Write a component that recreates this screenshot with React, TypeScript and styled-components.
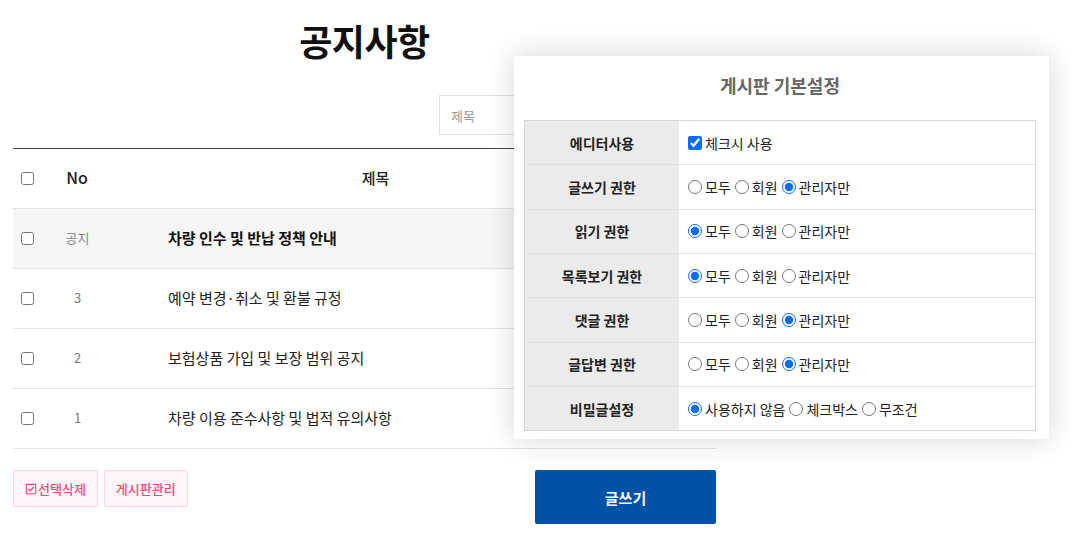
import React from "react";
import styled, { createGlobalStyle } from "styled-components";
import { FaRegCheckSquare } from "react-icons/fa";

const Global = createGlobalStyle`
  html, body { margin: 0; padding: 0; background: #fff; }
  body { font-family: "Noto Sans CJK KR", "Noto Sans", sans-serif; color: #222; }
  * { box-sizing: border-box; }
`;

const Page = styled.div`
  position: relative;
  width: 1072px;
  height: 535px;
  overflow: hidden;
  padding: 0 13px;
`;

const Board = styled.div`
  width: 703px;
  display: flex;
  flex-direction: column;
`;

const Title = styled.h1`
  margin: 0;
  padding-top: 17px;
  height: 62px;
  font-size: 36px;
  line-height: 46px;
  font-weight: 700;
  text-align: center;
  color: #111;
  letter-spacing: -0.5px;
`;

const SearchRow = styled.div`
  display: flex;
  justify-content: flex-end;
  margin-top: 33px;
  height: 40px;
`;

const SearchInput = styled.input`
  width: 200px;
  height: 40px;
  border: 1px solid #e2e2e2;
  padding: 0 11px;
  font-family: inherit;
  font-size: 13px;
  color: #333;
  outline: none;
  &::placeholder { color: #999; }
`;

const SearchButton = styled.button`
  width: 77px;
  height: 40px;
  border: 0;
  background: #333;
  color: #fff;
  font-family: inherit;
`;

const Table = styled.div`
  margin-top: 13px;
  border-top: 1px solid #444;
  display: flex;
  flex-direction: column;
`;

const Row = styled.div<{ $notice?: boolean }>`
  display: grid;
  grid-template-columns: 30px 72px 1fr 80px;
  align-items: center;
  height: 60px;
  padding-bottom: 3px;
  border-bottom: 1px solid #e4e4e4;
  background: ${(p) => (p.$notice ? "#f6f6f7" : "#fff")};
`;

const Check = styled.input.attrs({ type: "checkbox" })`
  margin: 3px 0 0 8px;
  width: 13px;
  height: 13px;
`;

const HeadNo = styled.div`
  text-align: center;
  font-size: 16px;
  font-weight: 500;
  color: #222;
  padding-right: 4px;
`;

const HeadTitle = styled.div`
  text-align: center;
  font-size: 15px;
  font-weight: 500;
  color: #222;
`;

const NoCell = styled.div<{ $notice?: boolean }>`
  text-align: center;
  font-size: 13px;
  color: ${(p) => (p.$notice ? "#888" : "#777")};
  padding-right: 3px;
`;

const TitleCell = styled.div<{ $bold?: boolean }>`
  padding-left: 53px;
  font-size: 15px;
  font-weight: ${(p) => (p.$bold ? 700 : 400)};
  color: ${(p) => (p.$bold ? "#111" : "#222")};
  white-space: nowrap;
`;

const Footer = styled.div`
  display: flex;
  justify-content: space-between;
  align-items: flex-start;
  margin-top: 21px;
`;

const ButtonGroup = styled.div`
  display: flex;
  gap: 6px;
`;

const PinkButton = styled.button`
  display: flex;
  align-items: center;
  gap: 1px;
  height: 37px;
  padding: 0 11px;
  border: 1px solid #fcd3de;
  background: #fff6f9;
  color: #f24c7a;
  font-family: inherit;
  font-size: 13px;
  font-weight: 500;
  border-radius: 2px;
  svg { width: 12px; height: 12px; }
`;

const WriteButton = styled.button`
  width: 181px;
  height: 54px;
  border: 0;
  border-radius: 2px;
  background: #0052a4;
  color: #fff;
  font-family: inherit;
  font-size: 15px;
  font-weight: 700;
`;

const Modal = styled.div`
  position: absolute;
  left: 514px;
  top: 56px;
  width: 535px;
  height: 383px;
  background: #fff;
  box-shadow: 0 0 28px rgba(0, 0, 0, 0.16);
  padding: 0 13px 0 10px;
  display: flex;
  flex-direction: column;
`;

const ModalTitle = styled.h2`
  margin: 0;
  height: 64px;
  line-height: 58px;
  text-align: center;
  font-size: 18px;
  font-weight: 700;
  color: #666;
`;

const SetTable = styled.div`
  border: 1px solid #d8d8d8;
  display: flex;
  flex-direction: column;
`;

const SetRow = styled.div`
  display: grid;
  grid-template-columns: 154px 1fr;
  height: 44.3px;
  border-top: 1px solid #e2e2e2;
  &:first-child { border-top: 0; height: 43.4px; }
`;

const SetLabel = styled.div`
  background: #ebebeb;
  display: flex;
  align-items: center;
  justify-content: center;
  font-size: 14px;
  font-weight: 700;
  color: #222;
`;

const SetValue = styled.div`
  display: flex;
  align-items: center;
  padding-left: 9px;
  font-size: 14px;
  color: #222;
`;

const Option = styled.label`
  display: flex;
  align-items: center;
  margin-right: 4px;
  input {
    margin: 0 3px 0 0;
    width: 14px;
    height: 14px;
    accent-color: #0f6cf0;
  }
`;

const radioRows: { label: string; options: string[]; checked: number }[] = [
  { label: "글쓰기 권한", options: ["모두", "회원", "관리자만"], checked: 2 },
  { label: "읽기 권한", options: ["모두", "회원", "관리자만"], checked: 0 },
  { label: "목록보기 권한", options: ["모두", "회원", "관리자만"], checked: 0 },
  { label: "댓글 권한", options: ["모두", "회원", "관리자만"], checked: 2 },
  { label: "글답변 권한", options: ["모두", "회원", "관리자만"], checked: 2 },
  { label: "비밀글설정", options: ["사용하지 않음", "체크박스", "무조건"], checked: 0 },
];

const posts = [
  { no: "공지", title: "차량 인수 및 반납 정책 안내", notice: true },
  { no: "3", title: "예약 변경·취소 및 환불 규정" },
  { no: "2", title: "보험상품 가입 및 보장 범위 공지" },
  { no: "1", title: "차량 이용 준수사항 및 법적 유의사항" },
];

export default function App() {
  return (
    <Page>
      <Global />
      <Board>
        <Title>공지사항</Title>
        <SearchRow>
          <SearchInput placeholder="제목" />
          <SearchButton>검색</SearchButton>
        </SearchRow>
        <Table>
          <Row>
            <Check />
            <HeadNo>No</HeadNo>
            <HeadTitle>제목</HeadTitle>
            <div />
          </Row>
          {posts.map((p) => (
            <Row key={p.no} $notice={p.notice}>
              <Check />
              <NoCell $notice={p.notice}>{p.no}</NoCell>
              <TitleCell $bold={p.notice}>{p.title}</TitleCell>
              <div />
            </Row>
          ))}
        </Table>
        <Footer>
          <ButtonGroup>
            <PinkButton>
              <FaRegCheckSquare />
              선택삭제
            </PinkButton>
            <PinkButton>게시판관리</PinkButton>
          </ButtonGroup>
          <WriteButton>글쓰기</WriteButton>
        </Footer>
      </Board>

      <Modal>
        <ModalTitle>게시판 기본설정</ModalTitle>
        <SetTable>
          <SetRow>
            <SetLabel>에디터사용</SetLabel>
            <SetValue>
              <Option>
                <input type="checkbox" defaultChecked />
                체크시 사용
              </Option>
            </SetValue>
          </SetRow>
          {radioRows.map((r, i) => (
            <SetRow key={r.label}>
              <SetLabel>{r.label}</SetLabel>
              <SetValue>
                {r.options.map((o, j) => (
                  <Option key={o}>
                    <input type="radio" name={`r${i}`} defaultChecked={j === r.checked} />
                    {o}
                  </Option>
                ))}
              </SetValue>
            </SetRow>
          ))}
        </SetTable>
      </Modal>
    </Page>
  );
}
